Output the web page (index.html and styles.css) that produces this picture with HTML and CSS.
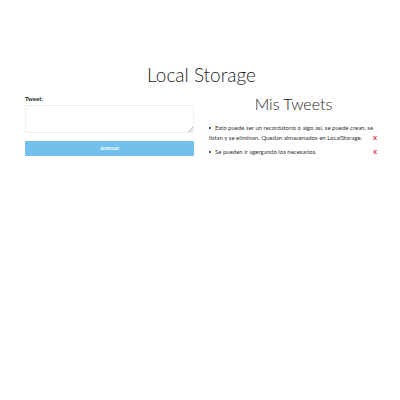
FILE: index.html
```html
<!DOCTYPE html>
<html lang="es">
<head>
<meta charset="utf-8">
<meta name="viewport" content="width=device-width, initial-scale=1">
<title>Local Storage</title>
<link rel="stylesheet" href="styles.css">
</head>
<body>
<main class="container">
  <h1 class="title">Local Storage</h1>
  <div class="row">
    <form class="form">
      <label class="label" for="tweet">Tweet:</label>
      <textarea class="field" id="tweet"></textarea>
      <button class="submit" type="button">AGREGAR</button>
    </form>
    <section class="tweets">
      <h2 class="title">Mis Tweets</h2>
      <ul class="list">
        <li class="item"><span class="text">Esto puede ser un recordatorio o algo así, se puede crean, se listan y se eliminan. Quedan almacenados en LocalStorage.</span><button class="remove" type="button">X</button></li>
        <li class="item"><span class="text">Se pueden ir agergando los necesarios.</span><button class="remove" type="button">X</button></li>
      </ul>
    </section>
  </div>
</main>
</body>
</html>
```
FILE: styles.css
```css
* {
  box-sizing: border-box;
}

body {
  margin: 0;
  background: #fff;
  color: #222;
  font-family: Lato, sans-serif;
  font-size: 6px;
  line-height: 10px;
}

.container {
  padding: 63px 22px 0 25px;
}

.title {
  margin: 0;
  font-size: 19px;
  font-weight: 300;
  line-height: 24px;
  text-align: center;
}

.row {
  display: grid;
  grid-template-columns: 1fr 1fr;
  gap: 15px;
  padding-top: 6px;
}

.form {
  display: flex;
  flex-direction: column;
  padding-top: 1px;
}

.label {
  font-weight: 700;
}

.field {
  height: 28px;
  margin: 1px 0 8px;
  padding: 3px;
  border: 1px solid #eee;
  border-radius: 2px;
  background: #fff;
  font: inherit;
  resize: vertical;
}

.field::-webkit-resizer {
  background: linear-gradient(135deg, #fff 50%, #bbb 50% 60%, #fff 60% 70%, #bbb 70% 80%, #fff 80%) right bottom / 5px 5px no-repeat;
}

.submit {
  height: 15px;
  padding: 0;
  border: 0;
  border-radius: 1px;
  background: #74c0ed;
  color: #fff;
  font: inherit;
  font-size: 4px;
  font-weight: 700;
}

.tweets .title {
  font-size: 16px;
  line-height: 22px;
}

.list {
  margin: 8px 0 0;
  padding: 0;
  list-style: none;
}

.item {
  display: flex;
  align-items: flex-end;
  justify-content: space-between;
  margin-bottom: 4px;
}

.text {
  width: 98%;
  margin-right: -4px;
  flex: none;
  color: #333;
}

.text::before {
  content: "";
  display: inline-block;
  width: 2px;
  height: 2px;
  margin-right: 4px;
  border-radius: 1px;
  background: #222;
  vertical-align: 1px;
}

.remove {
  padding: 0 1px 0 0;
  border: 0;
  background: none;
  color: #d3224c;
  font: inherit;
  font-weight: 700;
}
```
